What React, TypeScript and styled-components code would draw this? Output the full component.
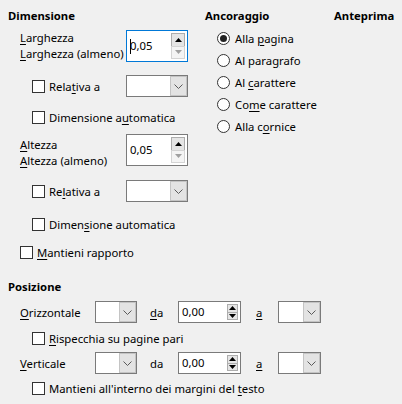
import React from 'react';
import styled, { createGlobalStyle } from 'styled-components';

const Global = createGlobalStyle`
  html, body { margin: 0; padding: 0; background: #f0f0f0; }
  body { font-family: "Noto Sans", "Open Sans", sans-serif; font-size: 11.3px; color: #000; }
`;

const Page = styled.div`
  width: 402px;
  height: 404px;
  box-sizing: border-box;
  padding: 8px 0 0 8px;
  overflow: hidden;
  background: #f0f0f0;
  display: flex;
  flex-direction: column;
`;

const Top = styled.div`
  display: flex;
`;

const LeftCol = styled.div`
  width: 197px;
  display: flex;
  flex-direction: column;
`;

const AnchorCol = styled.div`
  width: 129px;
  display: flex;
  flex-direction: column;
`;

const PreviewCol = styled.div`
  display: flex;
  flex-direction: column;
`;

const Title = styled.div<{ $mt?: number }>`
  font-weight: bold;
  line-height: 16px;
  height: 16px;
  white-space: nowrap;
  margin-top: ${p => p.$mt ?? 0}px;
`;

const Mn = styled.span`
  text-decoration: underline;
  text-underline-offset: 2px;
`;

const SizeRow = styled.div<{ $mt: number }>`
  display: flex;
  margin-top: ${p => p.$mt}px;
  padding-left: 12px;
  height: 32px;
`;

const SizeLabels = styled.div<{ $pt: number }>`
  width: 106px;
  padding-top: ${p => p.$pt}px;
  line-height: 16px;
  white-space: nowrap;
  display: flex;
  flex-direction: column;
`;

const SpinBox = styled.div<{ $focused?: boolean; $w: number; $h: number }>`
  width: ${p => p.$w}px;
  height: ${p => p.$h}px;
  box-sizing: border-box;
  border: 1px solid ${p => (p.$focused ? '#0078d7' : '#7a7a7a')};
  background: #fff;
  display: flex;
  align-items: center;
  padding: 0 2px 0 3px;
`;

const SpinValue = styled.div`
  flex: 1;
  display: flex;
  align-items: center;
  line-height: 16px;
`;

const Caret = styled.span`
  display: inline-block;
  width: 1px;
  height: 15px;
  background: #000;
  margin-right: -1px;
`;

const SpinButtons = styled.div<{ $w: number }>`
  width: ${p => p.$w}px;
  align-self: stretch;
  padding: 2px 0;
  display: flex;
  flex-direction: column;
`;

const SpinBtn = styled.div<{ $disabled?: boolean }>`
  flex: 1;
  box-sizing: border-box;
  border: 1px solid ${p => (p.$disabled ? '#d4d4d4' : '#adadad')};
  background: ${p => (p.$disabled ? '#f4f4f4' : '#e5e5e5')};
  display: flex;
  align-items: center;
  justify-content: center;
  & + & { margin-top: -1px; }
`;

const Arrow = ({ up, color }: { up?: boolean; color: string }) => (
  <svg width="7" height="4" viewBox="0 0 7 4">
    {up ? <polygon points="0,4 7,4 3.5,0" fill={color} /> : <polygon points="0,0 7,0 3.5,4" fill={color} />}
  </svg>
);

const Spin = ({ value, focused, w, h, btnW, downDisabled, caret }: {
  value: string; focused?: boolean; w: number; h: number; btnW: number; downDisabled?: boolean; caret?: boolean;
}) => (
  <SpinBox $focused={focused} $w={w} $h={h}>
    <SpinValue>{caret && <Caret />}{value}</SpinValue>
    <SpinButtons $w={btnW}>
      <SpinBtn><Arrow up color="#000" /></SpinBtn>
      <SpinBtn $disabled={downDisabled}><Arrow color={downDisabled ? '#a0a0a0' : '#000'} /></SpinBtn>
    </SpinButtons>
  </SpinBox>
);

const ComboBox = styled.div<{ $w: number }>`
  width: ${p => p.$w}px;
  height: 22px;
  box-sizing: border-box;
  border: 1px solid #7a7a7a;
  background: #fff;
  display: flex;
  justify-content: flex-end;
  flex: none;
`;

const DropBtn = styled.div`
  width: 17px;
  box-sizing: border-box;
  border: 1px solid #c4c4c4;
  background: #e3e3e3;
  display: flex;
  align-items: center;
  justify-content: center;
`;

const Combo = ({ w }: { w: number }) => (
  <ComboBox $w={w}>
    <DropBtn>
      <svg width="9" height="5" viewBox="0 0 9 5">
        <polyline points="0.5,0.5 4.5,4.5 8.5,0.5" fill="none" stroke="#5a5a5a" strokeWidth="1" />
      </svg>
    </DropBtn>
  </ComboBox>
);

const CheckRow = styled.div<{ $mt: number; $indent: number }>`
  display: flex;
  align-items: center;
  height: 22px;
  margin-top: ${p => p.$mt}px;
  padding-left: ${p => p.$indent}px;
`;

const CheckLabelGroup = styled.div<{ $w?: number }>`
  display: flex;
  align-items: center;
  flex: none;
  width: ${p => (p.$w ? `${p.$w}px` : 'auto')};
`;

const Box = styled.span`
  width: 13px;
  height: 13px;
  box-sizing: border-box;
  border: 1px solid #333;
  background: #fff;
  flex: none;
`;

const LabelText = styled.span`
  margin-left: 4px;
  white-space: nowrap;
`;

const RadioRow = styled.div<{ $mt: number }>`
  display: flex;
  align-items: center;
  height: 22px;
  margin-top: ${p => p.$mt}px;
  padding-left: 12px;
`;

const RadioCircle = styled.span<{ $checked?: boolean }>`
  width: 13px;
  height: 13px;
  box-sizing: border-box;
  border: 1px solid #333;
  border-radius: 50%;
  background: #fff;
  display: flex;
  align-items: center;
  justify-content: center;
  flex: none;
  &::after {
    content: '';
    display: ${p => (p.$checked ? 'block' : 'none')};
    width: 7px;
    height: 7px;
    border-radius: 50%;
    background: #222;
  }
`;

const RadioText = styled.span`
  margin-left: 5px;
  white-space: nowrap;
`;

const PosRow = styled.div<{ $mt: number }>`
  display: flex;
  align-items: center;
  height: 22px;
  margin-top: ${p => p.$mt}px;
  padding-left: 12px;
`;

const PosLabel = styled.span<{ $w: number; $ml?: number }>`
  width: ${p => p.$w}px;
  margin-left: ${p => p.$ml ?? 0}px;
  white-space: nowrap;
  flex: none;
`;

const Check = ({ children, mt, indent, labelW, combo }: {
  children: React.ReactNode; mt: number; indent: number; labelW?: number; combo?: number;
}) => (
  <CheckRow $mt={mt} $indent={indent}>
    <CheckLabelGroup $w={labelW}>
      <Box />
      <LabelText>{children}</LabelText>
    </CheckLabelGroup>
    {combo && <Combo w={combo} />}
  </CheckRow>
);

const Radio = ({ children, mt, checked }: { children: React.ReactNode; mt: number; checked?: boolean }) => (
  <RadioRow $mt={mt}>
    <RadioCircle $checked={checked} />
    <RadioText>{children}</RadioText>
  </RadioRow>
);

export default function App() {
  return (
    <>
      <Global />
      <Page>
        <Top>
          <LeftCol>
            <Title>Dimensione</Title>
            <SizeRow $mt={6}>
              <SizeLabels $pt={0}>
                <span><Mn>L</Mn>arghezza</span>
                <span><Mn>L</Mn>arghezza (almeno)</span>
              </SizeLabels>
              <Spin value="0,05" caret focused w={62} h={32} btnW={14} downDisabled />
            </SizeRow>
            <Check mt={13} indent={24} labelW={94} combo={62}>
              Rela<Mn>t</Mn>iva a
            </Check>
            <Check mt={9} indent={24}>
              Dimensione a<Mn>u</Mn>tomatica
            </Check>
            <SizeRow $mt={6}>
              <SizeLabels $pt={3}>
                <span><Mn>A</Mn>ltezza</span>
                <span><Mn>A</Mn>ltezza (almeno)</span>
              </SizeLabels>
              <Spin value="0,05" w={62} h={32} btnW={14} downDisabled />
            </SizeRow>
            <Check mt={14} indent={24} labelW={94} combo={62}>
              Re<Mn>l</Mn>ativa a
            </Check>
            <Check mt={11} indent={24}>
              Dimen<Mn>s</Mn>ione automatica
            </Check>
            <Check mt={6} indent={12}>
              <Mn>M</Mn>antieni rapporto
            </Check>
          </LeftCol>
          <AnchorCol>
            <Title>Ancoraggio</Title>
            <Radio mt={3} checked>Alla <Mn>p</Mn>agina</Radio>
            <Radio mt={0}>Al para<Mn>g</Mn>rafo</Radio>
            <Radio mt={0}>Al <Mn>c</Mn>arattere</Radio>
            <Radio mt={0}>Co<Mn>m</Mn>e carattere</Radio>
            <Radio mt={0}>Alla c<Mn>o</Mn>rnice</Radio>
          </AnchorCol>
          <PreviewCol>
            <Title>Anteprima</Title>
          </PreviewCol>
        </Top>
        <Title $mt={16}>Posizione</Title>
        <PosRow $mt={6}>
          <PosLabel $w={75}><Mn>O</Mn>rizzontale</PosLabel>
          <Combo w={42} />
          <PosLabel $w={28} $ml={13}><Mn>d</Mn>a</PosLabel>
          <Spin value="0,00" w={63} h={22} btnW={11} />
          <PosLabel $w={22} $ml={15}><Mn>a</Mn></PosLabel>
          <Combo w={43} />
        </PosRow>
        <Check mt={4} indent={24}>
          <Mn>R</Mn>ispecchia su pagine pari
        </Check>
        <PosRow $mt={3}>
          <PosLabel $w={75}><Mn>V</Mn>erticale</PosLabel>
          <Combo w={42} />
          <PosLabel $w={28} $ml={13}>da</PosLabel>
          <Spin value="0,00" w={63} h={22} btnW={11} />
          <PosLabel $w={22} $ml={15}><Mn>a</Mn></PosLabel>
          <Combo w={43} />
        </PosRow>
        <Check mt={3} indent={24}>
          Mantieni all'interno dei margini del <Mn>t</Mn>esto
        </Check>
      </Page>
    </>
  );
}
